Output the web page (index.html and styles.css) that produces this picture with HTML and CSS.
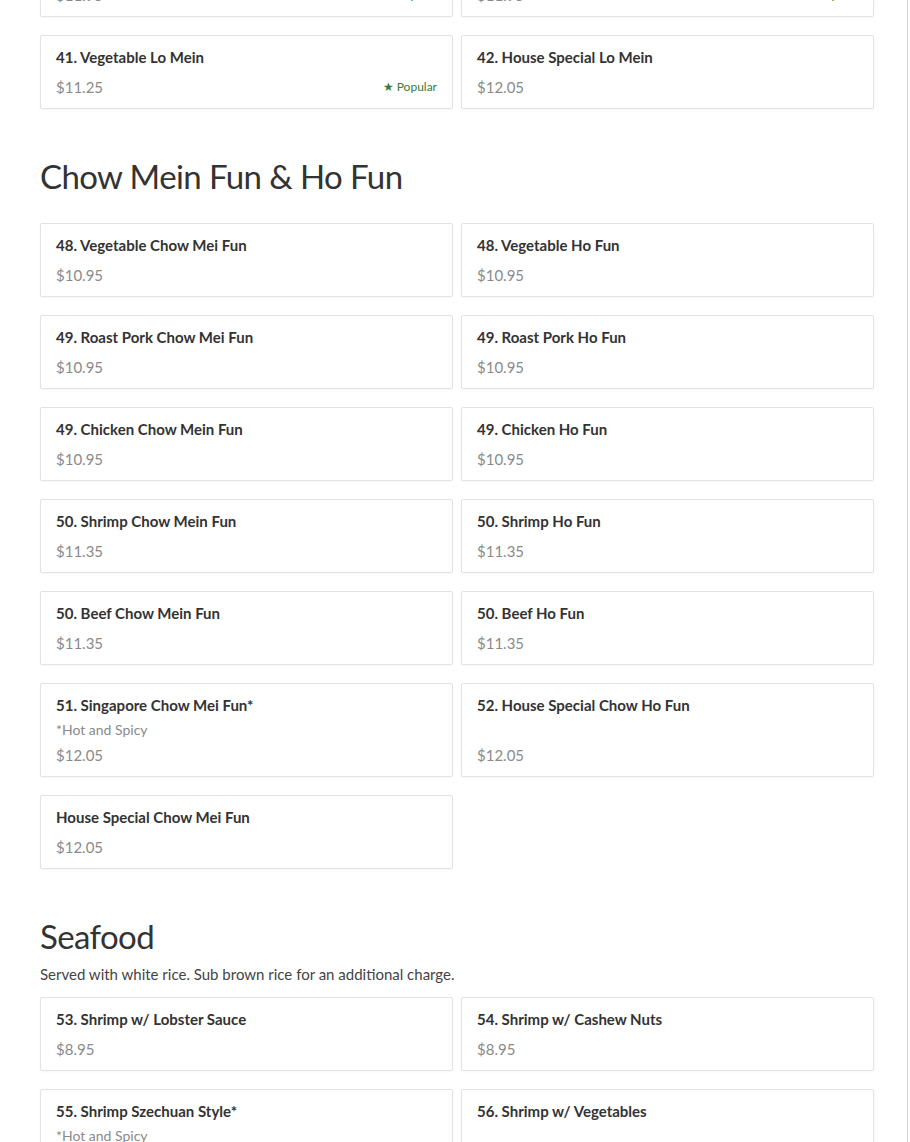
FILE: index.html
```html
<!DOCTYPE html>
<html lang="en">
<head>
<meta charset="utf-8">
<title>Menu</title>
<link rel="stylesheet" href="styles.css">
</head>
<body>
<main class="page">
  <div class="menu">
    <section class="section section--cut">
      <div class="grid">
        <div class="card"><div class="card-title">40. Roast Pork Lo Mein</div><div class="card-desc"></div><div class="card-foot"><span class="price">$11.95</span><span class="popular">★ Popular</span></div></div>
        <div class="card"><div class="card-title">40. Chicken Lo Mein</div><div class="card-desc"></div><div class="card-foot"><span class="price">$11.95</span><span class="popular">★ Popular</span></div></div>
        <div class="card"><div class="card-title">41. Vegetable Lo Mein</div><div class="card-desc"></div><div class="card-foot"><span class="price">$11.25</span><span class="popular">★ Popular</span></div></div>
        <div class="card"><div class="card-title">42. House Special Lo Mein</div><div class="card-desc"></div><div class="card-foot"><span class="price">$12.05</span></div></div>
      </div>
    </section>

    <section class="section">
      <div class="section-head">
        <h2 class="section-title">Chow Mein Fun &amp; Ho Fun</h2>
      </div>
      <div class="grid">
        <div class="card"><div class="card-title">48. Vegetable Chow Mei Fun</div><div class="card-desc"></div><div class="card-foot"><span class="price">$10.95</span></div></div>
        <div class="card"><div class="card-title">48. Vegetable Ho Fun</div><div class="card-desc"></div><div class="card-foot"><span class="price">$10.95</span></div></div>
        <div class="card"><div class="card-title">49. Roast Pork Chow Mei Fun</div><div class="card-desc"></div><div class="card-foot"><span class="price">$10.95</span></div></div>
        <div class="card"><div class="card-title">49. Roast Pork Ho Fun</div><div class="card-desc"></div><div class="card-foot"><span class="price">$10.95</span></div></div>
        <div class="card"><div class="card-title">49. Chicken Chow Mein Fun</div><div class="card-desc"></div><div class="card-foot"><span class="price">$10.95</span></div></div>
        <div class="card"><div class="card-title">49. Chicken Ho Fun</div><div class="card-desc"></div><div class="card-foot"><span class="price">$10.95</span></div></div>
        <div class="card"><div class="card-title">50. Shrimp Chow Mein Fun</div><div class="card-desc"></div><div class="card-foot"><span class="price">$11.35</span></div></div>
        <div class="card"><div class="card-title">50. Shrimp Ho Fun</div><div class="card-desc"></div><div class="card-foot"><span class="price">$11.35</span></div></div>
        <div class="card"><div class="card-title">50. Beef Chow Mein Fun</div><div class="card-desc"></div><div class="card-foot"><span class="price">$11.35</span></div></div>
        <div class="card"><div class="card-title">50. Beef Ho Fun</div><div class="card-desc"></div><div class="card-foot"><span class="price">$11.35</span></div></div>
        <div class="card"><div class="card-title">51. Singapore Chow Mei Fun*</div><div class="card-desc">*Hot and Spicy</div><div class="card-foot"><span class="price">$12.05</span></div></div>
        <div class="card"><div class="card-title">52. House Special Chow Ho Fun</div><div class="card-desc"></div><div class="card-foot"><span class="price">$12.05</span></div></div>
        <div class="card"><div class="card-title">House Special Chow Mei Fun</div><div class="card-desc"></div><div class="card-foot"><span class="price">$12.05</span></div></div>
      </div>
    </section>

    <section class="section">
      <div class="section-head section-head--desc">
        <h2 class="section-title">Seafood</h2>
        <p class="section-desc">Served with white rice. Sub brown rice for an additional charge.</p>
      </div>
      <div class="grid">
        <div class="card"><div class="card-title">53. Shrimp w/ Lobster Sauce</div><div class="card-desc"></div><div class="card-foot"><span class="price">$8.95</span></div></div>
        <div class="card"><div class="card-title">54. Shrimp w/ Cashew Nuts</div><div class="card-desc"></div><div class="card-foot"><span class="price">$8.95</span></div></div>
        <div class="card"><div class="card-title">55. Shrimp Szechuan Style*</div><div class="card-desc">*Hot and Spicy</div><div class="card-foot"><span class="price">$8.95</span></div></div>
        <div class="card"><div class="card-title">56. Shrimp w/ Vegetables</div><div class="card-desc"></div><div class="card-foot"><span class="price">$8.95</span></div></div>
      </div>
    </section>
  </div>
</main>
</body>
</html>
```

FILE: styles.css
```css
html, body {
  margin: 0;
  padding: 0;
  background: #fff;
}
body {
  font-family: Lato, "Noto Sans", "Liberation Sans", sans-serif;
  color: #333;
  overflow: hidden;
}
.page {
  width: 867px;
  padding: 0 0 0 40px;
  border-right: 1px solid #d6d6d6;
  min-height: 1142px;
  box-sizing: content-box;
}
.menu {
  width: 834px;
  margin-top: -57px;
}
.section + .section {
  margin-top: 45px;
}
.section-head {
  margin-bottom: 25px;
}
.section-head--desc {
  margin-bottom: 12px;
}
.section-title {
  margin: 0;
  font-size: 33px;
  line-height: 44px;
  font-weight: 400;
  letter-spacing: -0.6px;
  color: #333;
}
.section-desc {
  margin: 5px 0 0;
  font-size: 15px;
  line-height: 22px;
  color: #444;
}
.grid {
  display: grid;
  grid-template-columns: 1fr 1fr;
  column-gap: 8px;
  row-gap: 18px;
}
.card {
  display: flex;
  flex-direction: column;
  border: 1px solid #e3e3e3;
  border-radius: 2px;
  box-shadow: 0 1px 3px rgba(0, 0, 0, 0.04);
  padding: 11px 15px;
  background: #fff;
}
.card-title {
  font-size: 15px;
  line-height: 20px;
  font-weight: 700;
  color: #333;
}
.card-desc {
  margin: 5px 0;
  font-size: 14px;
  line-height: 20px;
  color: #8a8a8a;
}
.card-foot {
  margin-top: auto;
  display: flex;
  justify-content: space-between;
  align-items: center;
  line-height: 20px;
}
.price {
  font-size: 15px;
  color: #8a8a8a;
}
.popular {
  font-size: 12px;
  color: #3d7a35;
}
```
